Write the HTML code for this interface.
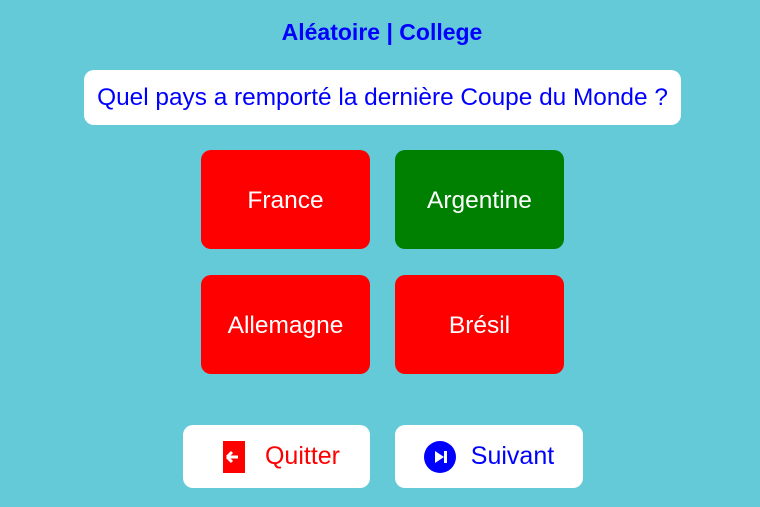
<!DOCTYPE html>
<html><head><meta charset="utf-8"><style>
body{margin:0;width:760px;height:507px;background:#64cad8;font-family:"Liberation Sans",Arial,sans-serif;position:relative;overflow:hidden}
.a{position:absolute;box-sizing:border-box;display:flex;align-items:center;justify-content:center}
.t{left:0;width:764px;top:14px;height:36px;color:#0000ff;font-weight:bold;font-size:23px}
.q{left:84px;top:70px;width:597px;height:55px;background:#fff;border-radius:10px;color:#0000ff;font-size:24.4px}
.b{width:169px;height:99px;border-radius:10px;color:#fff;font-size:24.5px;background:#ff0000;padding-top:2px}
.n{height:63px;background:#fff;border-radius:10px;font-size:25px}
</style></head><body>
<div class="a t">Aléatoire | College</div>
<div class="a q">Quel pays a remporté la dernière Coupe du Monde ?</div>
<div class="a b" style="left:201px;top:150px">France</div>
<div class="a b" style="left:395px;top:150px;background:#008000">Argentine</div>
<div class="a b" style="left:201px;top:275px">Allemagne</div>
<div class="a b" style="left:395px;top:275px">Brésil</div>
<div class="a n" style="left:183px;top:425px;width:187px;color:#ff0000;padding-left:10px">
<svg width="22" height="32" viewBox="0 0 22 32" style="margin-right:20px"><rect width="22" height="32" fill="#f00"/><path d="M4 16h11M4 16l5-5M4 16l5 5" stroke="#fff" stroke-width="3" fill="none"/></svg>Quitter</div>
<div class="a n" style="left:395px;top:425px;width:188px;color:#0000ff">
<svg width="32" height="32" viewBox="0 0 32 32" style="margin-right:15px"><circle cx="16" cy="16" r="16" fill="#00f"/><path d="M11 10v12l9-6z" fill="#fff"/><rect x="20" y="10" width="3" height="12" fill="#fff"/></svg>Suivant</div>
</body></html>
